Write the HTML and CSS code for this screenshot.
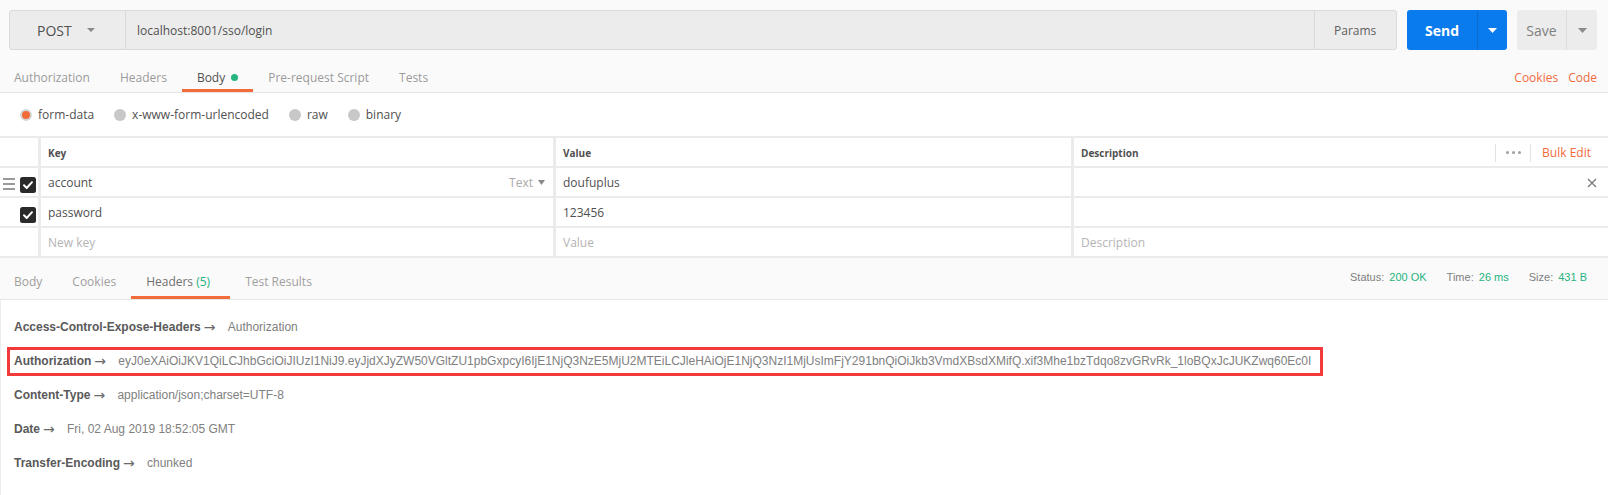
FILE: index.html
```html
<!DOCTYPE html>
<html lang="en">
<head>
<meta charset="utf-8">
<title>Postman - localhost:8001/sso/login</title>
<link rel="stylesheet" href="styles.css">
</head>
<body>
<div class="app">
  <div class="req-top">
    <div class="url-row">
      <div class="url-box">
        <div class="method">POST<svg class="caret" width="8" height="4" viewBox="0 0 8 4"><path d="M0 0H8L4 4Z" fill="#8a8a8a"/></svg></div>
        <div class="url">localhost:8001/sso/login</div>
        <div class="params">Params</div>
      </div>
      <div class="send">
        <span class="send-label">Send</span>
        <span class="send-caret"><svg width="9" height="5" viewBox="0 0 9 5"><path d="M0 0H9L4.5 5Z" fill="#ffffff"/></svg></span>
      </div>
      <div class="save">
        <span class="save-label">Save</span>
        <span class="save-caret"><svg width="9" height="5" viewBox="0 0 9 5"><path d="M0 0H9L4.5 5Z" fill="#8a8a8a"/></svg></span>
      </div>
    </div>
    <div class="tabbar">
      <div class="tabs">
        <div class="tab">Authorization</div>
        <div class="tab">Headers</div>
        <div class="tab active">Body<span class="dot"></span></div>
        <div class="tab">Pre-request Script</div>
        <div class="tab">Tests</div>
      </div>
      <div class="links">
        <span class="link">Cookies</span>
        <span class="link">Code</span>
      </div>
    </div>
  </div>

  <div class="body-types">
    <div class="radio-item"><span class="radio on"></span><span class="radio-label">form-data</span></div>
    <div class="radio-item"><span class="radio"></span><span class="radio-label">x-www-form-urlencoded</span></div>
    <div class="radio-item"><span class="radio"></span><span class="radio-label">raw</span></div>
    <div class="radio-item"><span class="radio"></span><span class="radio-label">binary</span></div>
  </div>

  <div class="kv-table">
    <div class="cell first"></div>
    <div class="cell head">Key</div>
    <div class="cell head">Value</div>
    <div class="cell head desc-head">
      <span>Description</span>
      <span class="head-tools">
        <span class="vsep"></span>
        <span class="dots"><i></i><i></i><i></i></span>
        <span class="vsep"></span>
        <span class="bulk">Bulk Edit</span>
      </span>
    </div>

    <div class="cell first">
      <span class="handle"><i></i><i></i><i></i></span>
      <svg class="check" width="16" height="16" viewBox="0 0 16 16"><rect width="16" height="16" rx="2.5" fill="#2a2a2a"/><path d="M4 8.3L6.7 11L12 5.2" fill="none" stroke="#fff" stroke-width="2" stroke-linecap="round" stroke-linejoin="round"/></svg>
    </div>
    <div class="cell key-cell"><span>account</span><span class="type">Text<svg width="7" height="5" viewBox="0 0 7 5"><path d="M0 0H7L3.5 5Z" fill="#8a8a8a"/></svg></span></div>
    <div class="cell">doufuplus</div>
    <div class="cell desc-cell"><span></span><svg class="close" width="10" height="10" viewBox="0 0 10 10"><path d="M1 1L9 9M9 1L1 9" stroke="#7a7a7a" stroke-width="1.3"/></svg></div>

    <div class="cell first">
      <svg class="check" width="16" height="16" viewBox="0 0 16 16"><rect width="16" height="16" rx="2.5" fill="#2a2a2a"/><path d="M4 8.3L6.7 11L12 5.2" fill="none" stroke="#fff" stroke-width="2" stroke-linecap="round" stroke-linejoin="round"/></svg>
    </div>
    <div class="cell">password</div>
    <div class="cell">123456</div>
    <div class="cell"></div>

    <div class="cell first"></div>
    <div class="cell ph">New key</div>
    <div class="cell ph">Value</div>
    <div class="cell ph">Description</div>
  </div>

  <div class="resp-bar">
    <div class="tabs">
      <div class="rtab">Body</div>
      <div class="rtab">Cookies</div>
      <div class="rtab active">Headers <span class="count">(5)</span></div>
      <div class="rtab">Test Results</div>
    </div>
    <div class="stats">
      <span class="stat">Status: <b>200 OK</b></span>
      <span class="stat">Time: <b>26 ms</b></span>
      <span class="stat">Size: <b>431 B</b></span>
    </div>
  </div>

  <div class="resp-headers">
    <div class="hrow"><span class="hk">Access-Control-Expose-Headers</span><span class="arr">→</span><span class="hv">Authorization</span></div>
    <div class="hrow"><span class="hl"><span class="hk">Authorization</span><span class="arr">→</span><span class="hv">eyJ0eXAiOiJKV1QiLCJhbGciOiJIUzI1NiJ9.eyJjdXJyZW50VGltZU1pbGxpcyI6IjE1NjQ3NzE5MjU2MTEiLCJleHAiOjE1NjQ3NzI1MjUsImFjY291bnQiOiJkb3VmdXBsdXMifQ.xif3Mhe1bzTdqo8zvGRvRk_1loBQxJcJUKZwq60Ec0I</span></span></div>
    <div class="hrow"><span class="hk">Content-Type</span><span class="arr">→</span><span class="hv">application/json;charset=UTF-8</span></div>
    <div class="hrow"><span class="hk">Date</span><span class="arr">→</span><span class="hv">Fri, 02 Aug 2019 18:52:05 GMT</span></div>
    <div class="hrow"><span class="hk">Transfer-Encoding</span><span class="arr">→</span><span class="hv">chunked</span></div>
  </div>
</div>
</body>
</html>
```
FILE: styles.css
```css
* { box-sizing: border-box; }

html, body {
  margin: 0;
  padding: 0;
  background: #ffffff;
}

body {
  width: 1608px;
  height: 495px;
  overflow: hidden;
  font-family: "Open Sans", "Noto Sans", sans-serif;
  font-size: 12px;
  color: #505050;
}

/* ---------- request top ---------- */
.req-top {
  background: #fafafa;
  border-bottom: 1px solid #e6e6e6;
}

.url-row {
  display: flex;
  height: 50px;
  padding: 10px 0 0 9px;
}

.url-box {
  display: flex;
  width: 1388px;
  height: 40px;
  border: 1px solid #dadada;
  border-radius: 3px;
  background: #ececec;
}

.method {
  display: flex;
  align-items: center;
  width: 116px;
  padding-left: 27px;
  border-right: 1px solid #d8d8d8;
  font-size: 14px;
  color: #505050;
}

.method .caret {
  margin-left: 15px;
}

.url {
  flex: 1;
  display: flex;
  align-items: center;
  padding-left: 11px;
  color: #505050;
}

.params {
  display: flex;
  align-items: center;
  width: 82px;
  padding-left: 19px;
  border-left: 1px solid #d8d8d8;
  color: #606060;
}

.send {
  display: flex;
  width: 100px;
  height: 40px;
  margin-left: 10px;
  border-radius: 3px;
  background: #097bed;
}

.send-label {
  display: flex;
  align-items: center;
  justify-content: center;
  width: 70px;
  color: #ffffff;
  font-size: 14px;
  font-weight: 700;
}

.send-caret {
  display: flex;
  align-items: center;
  justify-content: center;
  width: 30px;
  border-left: 1px solid #0a6cd0;
}

.save {
  display: flex;
  width: 80px;
  height: 40px;
  margin-left: 10px;
  border-radius: 3px;
  background: #ececec;
}

.save-label {
  display: flex;
  align-items: center;
  justify-content: center;
  width: 49px;
  color: #808080;
  font-size: 14px;
}

.save-caret {
  display: flex;
  align-items: center;
  justify-content: center;
  width: 31px;
  border-left: 1px solid #dcdcdc;
}

.tabbar {
  display: flex;
  justify-content: space-between;
  height: 42px;
}

.tabs {
  display: flex;
}

.tab {
  display: flex;
  align-items: center;
  height: 42px;
  padding: 15px 15px 0;
  border-bottom: 3px solid transparent;
  color: #9a9a9a;
}

.tab:first-child {
  padding-left: 14px;
}

.tab.active {
  color: #505050;
  border-bottom-color: #f26b3a;
}

.dot {
  display: inline-block;
  width: 7px;
  height: 7px;
  margin-left: 6px;
  border-radius: 50%;
  background: #26b47f;
}

.links {
  display: flex;
  align-items: center;
  gap: 10px;
  padding: 15px 11px 3px 0;
}

.link {
  color: #f26b3a;
}

/* ---------- body types ---------- */
.body-types {
  display: flex;
  align-items: center;
  height: 43px;
  padding-left: 20px;
}

.radio-item {
  display: flex;
  align-items: center;
  margin-right: 20px;
}

.radio {
  display: inline-block;
  width: 12px;
  height: 12px;
  border-radius: 50%;
  background: #c8c8c8;
}

.radio.on {
  background: #f26b3a;
  border: 2px solid #d6d6d6;
}

.radio-label {
  margin-left: 6px;
  color: #505050;
}

/* ---------- key/value table ---------- */
.kv-table {
  display: grid;
  grid-template-columns: 38px 515px 518px 1fr;
  border-top: 2px solid #ebebeb;
}

.cell {
  display: flex;
  align-items: center;
  height: 30px;
  padding-left: 7px;
  padding-top: 1px;
  border-bottom: 2px solid #ebebeb;
  border-left: 3px solid #ebebeb;
  color: #505050;
  white-space: nowrap;
}

.cell.first {
  border-left: none;
  padding-left: 0;
  position: relative;
}

.cell.head {
  font-size: 10px;
  font-weight: 700;
  color: #505050;
}

.cell.ph {
  color: #b4b4b4;
}

.desc-head {
  justify-content: space-between;
  padding-right: 17px;
}

.head-tools {
  display: flex;
  align-items: center;
  font-size: 12px;
  font-weight: 400;
}

.vsep {
  display: inline-block;
  width: 1px;
  height: 18px;
  background: #e2e2e2;
}

.dots {
  display: flex;
  gap: 3px;
  margin: 0 9px 0 10px;
}

.dots i {
  display: block;
  width: 3px;
  height: 3px;
  border-radius: 50%;
  background: #a0a0a0;
}

.bulk {
  margin-left: 11px;
  color: #f26b3a;
}

.handle {
  display: flex;
  flex-direction: column;
  gap: 3px;
  margin: 3px 0 0 3px;
}

.handle i {
  display: block;
  width: 12px;
  height: 2px;
  background: #9a9a9a;
}

.check {
  position: absolute;
  left: 20px;
  top: 9px;
}

.key-cell {
  justify-content: space-between;
  padding-right: 8px;
}

.type {
  display: flex;
  align-items: center;
  gap: 5px;
  color: #aaaaaa;
}

.desc-cell {
  justify-content: space-between;
  padding-right: 11px;
}

/* ---------- response bar ---------- */
.resp-bar {
  display: flex;
  justify-content: space-between;
  height: 42px;
  background: #fafafa;
  border-bottom: 1px solid #e6e6e6;
}

.rtab {
  display: flex;
  align-items: center;
  height: 41px;
  padding: 9px 15px 0;
  border-bottom: 3px solid transparent;
  color: #a0a0a0;
  white-space: pre;
}

.rtab:first-child {
  padding-left: 14px;
}

.rtab.active {
  color: #707070;
  border-bottom-color: #f26b3a;
  padding-right: 20px;
}

.count {
  color: #26b47f;
}

.stats {
  display: flex;
  align-items: center;
  gap: 20px;
  padding: 0 21px 4px 0;
  font-family: "Liberation Sans", Arial, sans-serif;
  font-size: 11px;
  color: #808080;
}

.stat b {
  font-weight: 400;
  color: #26b47f;
  margin-left: 2px;
}

/* ---------- response headers ---------- */
.resp-headers {
  padding-top: 10px;
  padding-left: 1px;
  height: 196px;
  border-left: 1px solid #ededed;
  font-family: "Liberation Sans", Arial, sans-serif;
  font-size: 12px;
}

.hrow {
  display: flex;
  align-items: center;
  height: 34px;
  padding-left: 12px;
  white-space: nowrap;
}

.hk {
  font-weight: 700;
  color: #595959;
}

.arr {
  display: inline-block;
  width: 14px;
  margin-left: 3px;
  font-family: "DejaVu Sans", sans-serif;
  font-size: 14px;
  line-height: 1;
  color: #6a6a6a;
}

.hv {
  margin-left: 10px;
  color: #808080;
}

.hl {
  display: inline-flex;
  align-items: center;
  height: 29px;
  margin-left: -7px;
  padding: 0 9px 0 4px;
  border: 3px solid #f23a3a;
}
```
